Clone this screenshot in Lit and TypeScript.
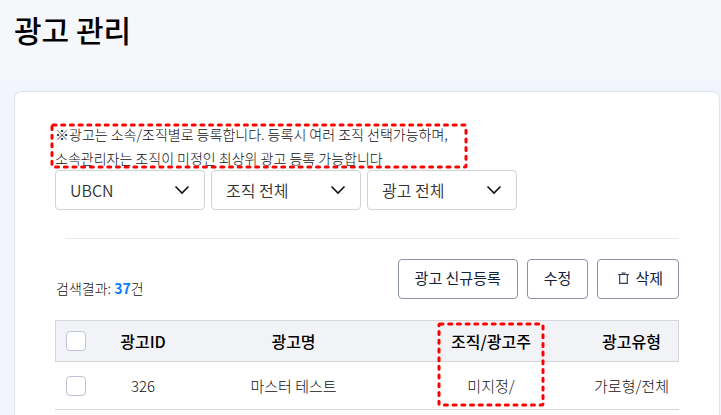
import { LitElement, html, css } from "lit";
import { customElement, property, state } from "lit/decorators.js";

interface AdRow {
  id: number;
  name: string;
  owner: string;
  type: string;
}

@customElement("dashed-mark")
export class DashedMark extends LitElement {
  static styles = css`
    :host {
      display: block;
      pointer-events: none;
    }
    .frame {
      display: block;
      width: 100%;
      height: 100%;
      overflow: visible;
    }
    .line {
      fill: none;
      stroke: #fe0000;
      stroke-width: 3;
      stroke-linecap: round;
      stroke-dasharray: 3 5.7;
    }
  `;

  render() {
    return html`<svg class="frame" aria-hidden="true">
      <rect class="line" width="100%" height="100%" rx="1"></rect>
    </svg>`;
  }
}

@customElement("filter-select")
export class FilterSelect extends LitElement {
  @property() label = "";
  @property({ attribute: false }) options: string[] = [];

  static styles = css`
    :host {
      display: block;
      position: relative;
      flex: 0 1 150px;
    }
    .box {
      appearance: none;
      display: block;
      box-sizing: border-box;
      width: 100%;
      height: 40px;
      margin: 0;
      padding: 0 40px 0 14px;
      border: 1px solid #d2d2d2;
      border-radius: 4px;
      background: #fff;
      color: #333;
      font: 350 16px "Noto Sans CJK KR", sans-serif;
    }
    .chevron {
      position: absolute;
      top: 12px;
      right: 15px;
      width: 16px;
      height: 16px;
      pointer-events: none;
    }
  `;

  render() {
    return html`
      <select class="box" aria-label=${this.label}>
        ${this.options.map((o) => html`<option>${o}</option>`)}
      </select>
      <svg class="chevron" viewBox="0 0 16 16" aria-hidden="true">
        <path d="M1.5 4.5 8 11l6.5-6.5" fill="none" stroke="#111" stroke-width="1.6" />
      </svg>
    `;
  }
}

@customElement("app-root")
export class AppRoot extends LitElement {
  @state() private rows: AdRow[] = [
    { id: 326, name: "마스터 테스트", owner: "미지정/", type: "가로형/전체" },
  ];
  @state() private total = 37;

  static styles = css`
    :host {
      display: flex;
      flex-direction: column;
      min-height: 100vh;
      background: #f2f5fd;
      color: #111;
      font-family: "Noto Sans CJK KR", sans-serif;
      font-weight: 300;
    }
    .top {
      box-sizing: border-box;
      height: 81px;
      padding: 7px 14px;
      background: #f5f7fb;
    }
    .title {
      margin: 0;
      font-size: 30px;
      line-height: 44px;
      font-weight: 500;
      color: #000;
    }
    .card {
      flex: 1;
      margin: 10px 1px 0 14px;
      padding: 30px 40px 0;
      border: 1px solid #e3e5ea;
      border-bottom: 0;
      border-radius: 8px 8px 0 0;
      background: #fff;
    }
    .note {
      position: relative;
    }
    .note-text {
      margin: 0;
      font-size: 14px;
      line-height: 24px;
    }
    .note-mark {
      position: absolute;
      top: 3px;
      left: -3px;
      width: 414px;
      height: 42px;
    }
    .filters {
      display: flex;
      gap: 6px;
    }
    .rule {
      margin: 28px 0 20px 10px;
      border: 0;
      border-top: 1px solid #e9e9ec;
    }
    .toolbar {
      display: flex;
      justify-content: space-between;
      margin-bottom: 20px;
    }
    .count {
      margin: 17px 0 0 1px;
      font-size: 14px;
      line-height: 24px;
    }
    .count-number {
      color: #0a7cff;
      font-weight: 700;
    }
    .actions {
      display: flex;
      gap: 9px;
    }
    .action {
      display: flex;
      align-items: center;
      justify-content: center;
      gap: 6px;
      box-sizing: border-box;
      height: 40px;
      padding: 0 16px 3px;
      border: 1px solid #8a93a3;
      border-radius: 4px;
      background: #fff;
      color: #13203a;
      font: 400 15px "Noto Sans CJK KR", sans-serif;
      white-space: nowrap;
    }
    .action.wide {
      padding-left: 20px;
      padding-right: 15px;
    }
    .trash {
      width: 11px;
      height: 12px;
    }
    .list {
      width: 100%;
      border-collapse: separate;
      border-spacing: 0;
      table-layout: fixed;
    }
    .col-check {
      width: 42px;
    }
    .col-id {
      width: 92px;
    }
    .col-owner {
      width: 186px;
    }
    .col-type {
      width: 95px;
    }
    .head {
      background: #f2f3f6;
      outline: 1px solid #d5d6d8;
      outline-offset: -1px;
    }
    .head-cell {
      position: relative;
      height: 42px;
      padding: 0;
      font-size: 16px;
      font-weight: 500;
      color: #000;
    }
    .cell {
      height: 47px;
      padding: 0;
      border-bottom: 1px solid #d5d6d8;
      font-size: 15px;
      text-align: center;
    }
    .check {
      appearance: none;
      display: block;
      box-sizing: border-box;
      width: 20px;
      height: 20px;
      margin: 0 auto;
      border: 1px solid #bfc2d9;
      border-radius: 4px;
      background: #fff;
    }
    .owner-mark {
      position: absolute;
      top: 4px;
      left: calc(50% - 52px);
      width: 104px;
      height: 81px;
    }
  `;

  render() {
    return html`
      <header class="top"><h1 class="title">광고 관리</h1></header>
      <main class="card">
        <div class="note">
          <p class="note-text">
            ※광고는 소속/조직별로 등록합니다. 등록시 여러 조직 선택가능하며,<br />소속관리자는 조직이 미정인 최상위 광고 등록 가능합니다
          </p>
          <dashed-mark class="note-mark"></dashed-mark>
        </div>
        <div class="filters">
          <filter-select label="소속" .options=${["UBCN"]}></filter-select>
          <filter-select label="조직" .options=${["조직 전체"]}></filter-select>
          <filter-select label="광고" .options=${["광고 전체"]}></filter-select>
        </div>
        <hr class="rule" />
        <div class="toolbar">
          <p class="count">검색결과: <span class="count-number">${this.total}</span>건</p>
          <div class="actions">
            <button class="action" type="button">광고 신규등록</button>
            <button class="action" type="button">수정</button>
            <button class="action wide" type="button">
              <svg class="trash" viewBox="0 0 11 12" aria-hidden="true">
                <path
                  d="M0 2.5h11M3.5 1.2h4M1.7 2.5v8.8h7.6V2.5"
                  fill="none"
                  stroke="#34405a"
                  stroke-width="1.2"
                />
              </svg>
              삭제
            </button>
          </div>
        </div>
        <table class="list">
          <colgroup>
            <col class="col-check" />
            <col class="col-id" />
            <col />
            <col class="col-owner" />
            <col class="col-type" />
          </colgroup>
          <thead>
            <tr class="head">
              <th class="head-cell"><input class="check" type="checkbox" aria-label="전체 선택" /></th>
              <th class="head-cell" scope="col">광고ID</th>
              <th class="head-cell" scope="col">광고명</th>
              <th class="head-cell" scope="col">
                조직/광고주
                <dashed-mark class="owner-mark"></dashed-mark>
              </th>
              <th class="head-cell" scope="col">광고유형</th>
            </tr>
          </thead>
          <tbody>
            ${this.rows.map(
              (r) => html`<tr>
                <td class="cell">
                  <input class="check" type="checkbox" aria-label=${`${r.id} 선택`} />
                </td>
                <td class="cell">${r.id}</td>
                <td class="cell">${r.name}</td>
                <td class="cell">${r.owner}</td>
                <td class="cell">${r.type}</td>
              </tr>`
            )}
          </tbody>
        </table>
      </main>
    `;
  }
}
